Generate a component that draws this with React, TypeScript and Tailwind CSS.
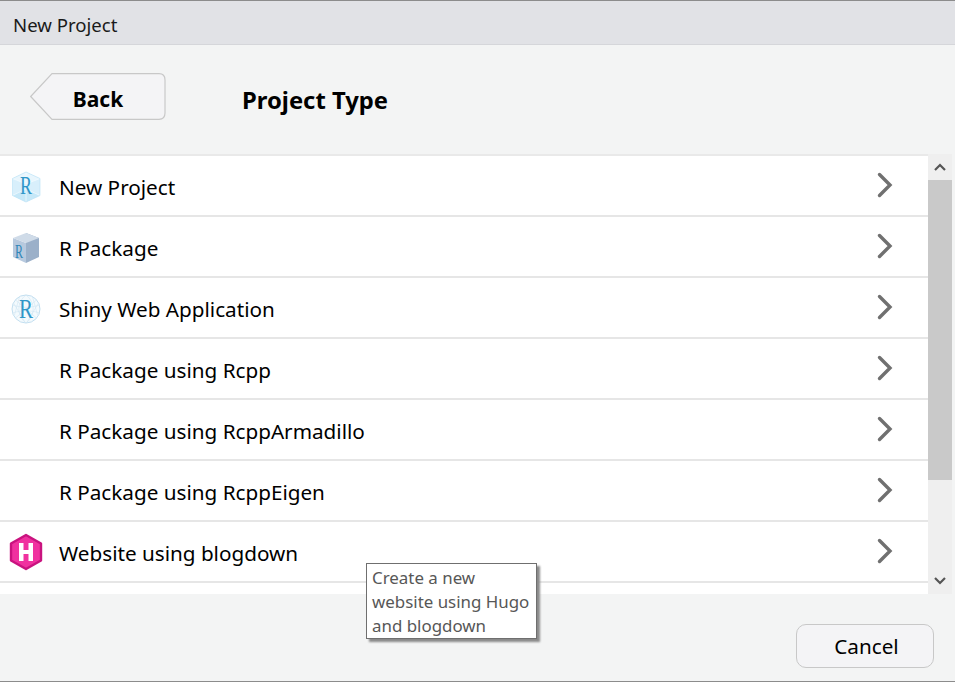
import React from "react";

const font = { fontFamily: '"Noto Sans", "Open Sans", sans-serif' };
const serif = "Liberation Serif, serif";

function Chevron() {
  return (
    <svg width="16" height="26" viewBox="0 0 16 26" className="block">
      <path d="M2.5 2.5 L13 13 L2.5 23.5" fill="none" stroke="#707070" strokeWidth="3.4" strokeLinecap="round" strokeLinejoin="miter" />
    </svg>
  );
}

function CubeLight() {
  return (
    <svg width="30" height="32" viewBox="0 0 30 32" className="mt-[2px] block">
      <path d="M15 1 L29 7.5 V24.5 L15 31 L1.5 24.5 V7.5 Z" fill="#d8effb" />
      <path d="M15 1 L29 7.5 L15 13 L1.5 7.5 Z" fill="#e9f6fd" />
      <path d="M1.5 24.5 L15 18 L29 24.5 L15 31 Z" fill="#c6e8f8" />
      <path d="M15 1 V31 M1.5 7.5 L15 13 L29 7.5 M1.5 24.5 L15 18 L29 24.5" fill="none" stroke="#f4fbff" strokeWidth="0.7" />
      <path d="M1.5 7.5 V24.5 L15 31 L29 24.5 V7.5 L15 1 Z" fill="none" stroke="#bfe4f6" strokeWidth="0.7" />
      <text x="9" y="23" fontSize="25" fontFamily={serif} fill="#2f96c8" textLength="12" lengthAdjust="spacingAndGlyphs">R</text>
    </svg>
  );
}

function CubeDark() {
  return (
    <svg width="30" height="32" viewBox="0 0 30 32" className="mt-[2px] block">
      <path d="M15 1 L28 6 V25 L15 31 Z" fill="#9bb0c9" />
      <path d="M2 6 L15 11 V31 L2 25 Z" fill="#b7c9de" />
      <path d="M15 1 L28 6 L15 11 L2 6 Z" fill="#cfdbe8" />
      <text x="4" y="26" fontSize="18" fontFamily={serif} fill="#2f86b8" textLength="8" lengthAdjust="spacingAndGlyphs">R</text>
    </svg>
  );
}

function Globe() {
  return (
    <svg width="30" height="32" viewBox="0 0 30 32" className="mt-[2px] block">
      <circle cx="15" cy="16" r="14" fill="#f4fafd" stroke="#c3dff0" strokeWidth="1" />
      <path d="M15 2 C5.500 9 5.500 23 15 30 C24.500 23 24.500 9 15 2 M1.500 12 C10 15 20 15 28.500 12 M1.500 20 C10 17 20 17 28.500 20 M4.500 7 L25.500 25 M25.500 7 L4.500 25 M8.500 3.500 L3.500 22 M21.500 3.500 L26.500 22 M2.500 10 L14.500 30 M27.500 10 L15.500 30" fill="none" stroke="#d0e6f4" strokeWidth="0.6" />
      <text x="8" y="25" fontSize="27" fontFamily={serif} fill="#2f96c8" textLength="14" lengthAdjust="spacingAndGlyphs">R</text>
    </svg>
  );
}

function Hugo() {
  return (
    <svg width="34" height="38" viewBox="0 0 34 38" className="ml-[-2px] mt-[1px] block">
      <path d="M17 2 L32 10.5 V27.5 L17 36 L2 27.5 V10.5 Z" fill="#f0319f" stroke="#c9137f" strokeWidth="2.4" strokeLinejoin="round" />
      <path d="M10 10 H14.5 V17 H19.5 V10 H24 V28 H19.5 V21 H14.5 V28 H10 Z" fill="#ffffff" />
    </svg>
  );
}

const rows: { label: string; icon: React.ReactNode }[] = [
  { label: "New Project", icon: <CubeLight /> },
  { label: "R Package", icon: <CubeDark /> },
  { label: "Shiny Web Application", icon: <Globe /> },
  { label: "R Package using Rcpp", icon: null },
  { label: "R Package using RcppArmadillo", icon: null },
  { label: "R Package using RcppEigen", icon: null },
  { label: "Website using blogdown", icon: <Hugo /> },
];

export default function App() {
  return (
    <div className="relative flex h-[682px] w-[955px] flex-col overflow-hidden bg-[#f3f4f4] text-black" style={font}>
      <div className="flex h-[45px] items-center border-t border-b border-t-[#8c8c8c] border-b-[#d5d6da] bg-[#e1e2e6] pl-[13px] pt-[5px] text-[18.6px] text-[#1a1a1a]">
        New Project
      </div>

      <div className="flex h-[109px] items-start pl-[30px] pt-[28px]">
        <button className="relative flex h-[47px] w-[136px] items-center justify-center pt-[6px] text-[21px] font-bold">
          <svg width="136" height="47" viewBox="0 0 136 47" className="absolute left-0 top-0">
            <path d="M0.7 23.5 L22 0.7 H129 Q135 0.7 135 7 V40 Q135 46.3 129 46.3 H22 Z" fill="#f4f4f6" stroke="#c8c8c8" strokeWidth="1.2" />
          </svg>
          <span className="relative">Back</span>
        </button>
        <h1 className="ml-[76px] mt-[11px] text-[23.8px] font-bold leading-[32px]">Project Type</h1>
      </div>

      <div className="flex h-[440px] items-stretch pr-[3px]">
        <div className="flex-1 overflow-hidden border-t-2 border-[#e9e9e9] bg-white">
          {rows.map((r) => (
            <div key={r.label} className="flex h-[61px] items-center border-b-2 border-[#e6e6e6]">
              <div className="flex w-[59px] shrink-0 items-center pl-[11px]">{r.icon}</div>
              <div className="flex-1 pt-[4px] text-[20.7px]">{r.label}</div>
              <div className="mb-[2px] mr-[35px]"><Chevron /></div>
            </div>
          ))}
        </div>
        <div className="flex w-[24px] flex-col bg-[#efefef]">
          <div className="flex h-[26px] items-center justify-center">
            <svg width="12" height="8" viewBox="0 0 12 8"><path d="M1 7 L6 2 L11 7" fill="none" stroke="#555" strokeWidth="2.2" /></svg>
          </div>
          <div className="h-[300px] bg-[#c9c9c9]" />
          <div className="flex flex-1 items-end justify-center pb-[9px]">
            <svg width="12" height="8" viewBox="0 0 12 8"><path d="M1 1 L6 6 L11 1" fill="none" stroke="#555" strokeWidth="2.2" /></svg>
          </div>
        </div>
      </div>

      <div className="flex flex-1 items-start justify-end border-b border-[#8c8c8c] pr-[21px] pt-[30px]">
        <button className="flex h-[44px] w-[138px] items-center justify-center rounded-[10px] border border-[#c8c8c8] bg-[#f4f4f6] pl-[3px] pt-[2px] text-[20.7px]">
          Cancel
        </button>
      </div>

      <div className="absolute left-[366px] top-[563px] w-[171px] border border-[#6f6f6f] bg-white px-[5px] pt-[2px] text-[16.9px] leading-[24px] text-[#575757] shadow-[3px_3px_2px_#8a8a8a]">
        Create a new<br />website using Hugo<br />and blogdown
      </div>
    </div>
  );
}
